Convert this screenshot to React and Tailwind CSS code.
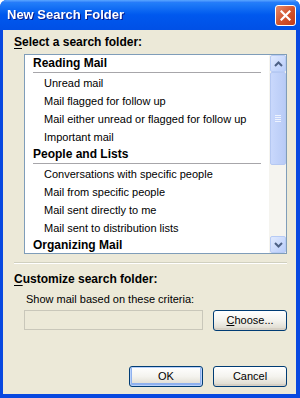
import React from "react";

const font = { fontFamily: '"Liberation Sans", Arial, sans-serif' };

function Header({ children }) {
  return (
    <div className="pl-[8px] pr-[8px]">
      <div className="h-[17px] leading-[17px] font-bold text-[12px] text-black whitespace-nowrap">{children}</div>
      <div className="h-[1px] bg-[#a7a6aa]" />
      <div className="h-[1px]" />
    </div>
  );
}

function Item({ children }) {
  return <div className="h-[18px] leading-[19px] pl-[19px] text-[11px] text-black whitespace-nowrap">{children}</div>;
}

function XPButton({ children, def, className = "" }) {
  return (
    <div
      className={
        "h-[21px] rounded-[3px] border border-[#003c74] bg-gradient-to-b from-[#ffffff] via-[#f4f3ee] to-[#dcd8cc] flex items-center justify-center text-[11px] text-black " +
        (def ? "shadow-[inset_0_0_0_1px_#b9d1fa,inset_0_-1px_0_2px_#8fb1ee] " : "shadow-[inset_0_-2px_0_#d6d0c5] ") +
        className
      }
    >
      {children}
    </div>
  );
}

function Arrow({ up }) {
  return (
    <div className="w-[16px] h-[17px] rounded-[2px] border border-[#b7cbf5] bg-gradient-to-br from-[#e1eafe] to-[#b9cdfa] flex items-center justify-center">
      <svg width="9" height="6" viewBox="0 0 9 6">
        <path d={up ? "M1 5 L4.5 1.5 L8 5" : "M1 1 L4.5 4.5 L8 1"} fill="none" stroke="#4d6185" strokeWidth="2" />
      </svg>
    </div>
  );
}

export default function App() {
  return (
    <div className="w-[300px] h-[398px] bg-white" style={font}>
      <div className="w-[300px] h-[398px] flex flex-col rounded-t-[7px] overflow-hidden bg-[#0842d9]">
        {/* title bar */}
        <div className="h-[30px] shrink-0 flex items-center justify-between pl-[7px] pr-[4px] bg-gradient-to-b from-[#2a86fb] via-[#0058ee] to-[#0050e6] relative">
          <div className="absolute inset-x-0 top-0 h-[3px] bg-gradient-to-b from-[#5ba6ff] to-[#1a72f8]" />
          <span className="relative text-white font-bold text-[13px] drop-shadow-[1px_1px_0_#0a1c8c]">
            New Search Folder
          </span>
          <div className="relative w-[21px] h-[21px] rounded-[3px] border border-white bg-gradient-to-br from-[#e68b6c] via-[#d2552f] to-[#c13b17] flex items-center justify-center">
            <svg width="11" height="11" viewBox="0 0 11 11">
              <path d="M1.5 1.5 L9.5 9.5 M9.5 1.5 L1.5 9.5" stroke="white" strokeWidth="2.2" strokeLinecap="square" />
            </svg>
          </div>
        </div>
        {/* body */}
        <div className="flex-1 flex pl-[3px] pr-[4px] pb-[4px] bg-[#0848e0]">
          <div className="flex-1 bg-[#ece9d8] flex flex-col pl-[11px] pr-[9px]">
            <div className="mt-[6px] h-[13px] leading-[13px] font-bold text-[12px] text-black">
              <span className="underline underline-offset-[2px]">S</span>elect a search folder:
            </div>
            <div className="mt-[5px] ml-[10px] h-[200px] border border-[#7f9db9] bg-white flex">
              <div className="flex-1 overflow-hidden">
                <Header>Reading Mail</Header>
                <Item>Unread mail</Item>
                <Item>Mail flagged for follow up</Item>
                <Item>Mail either unread or flagged for follow up</Item>
                <Item>Important mail</Item>
                <Header>People and Lists</Header>
                <Item>Conversations with specific people</Item>
                <Item>Mail from specific people</Item>
                <Item>Mail sent directly to me</Item>
                <Item>Mail sent to distribution lists</Item>
                <Header>Organizing Mail</Header>
              </div>
              <div className="w-[17px] bg-[#f5f4ef] flex flex-col items-end">
                <Arrow up />
                <div className="w-[16px] h-[93px] rounded-[2px] border border-[#b5c8f2] bg-gradient-to-r from-[#c9d8fc] to-[#b8cbf6] flex flex-col items-center justify-center gap-[1px]">
                  <div className="w-[6px] h-[1px] bg-[#eef3fe]" />
                  <div className="w-[6px] h-[1px] bg-[#eef3fe]" />
                  <div className="w-[6px] h-[1px] bg-[#eef3fe]" />
                  <div className="w-[6px] h-[1px] bg-[#eef3fe]" />
                </div>
                <div className="flex-1" />
                <Arrow />
              </div>
            </div>
            <div className="mt-[8px] h-[2px] border-t border-[#d0d0bf] border-b border-b-white" />
            <div className="mt-[9px] h-[13px] leading-[13px] font-bold text-[12px] text-black">
              <span className="underline underline-offset-[2px]">C</span>ustomize search folder:
            </div>
            <div className="mt-[7px] ml-[12px] h-[13px] leading-[13px] text-[11px] text-black">
              Show mail based on these criteria:
            </div>
            <div className="mt-[4px] ml-[10px] flex gap-[10px]">
              <div className="w-[179px] h-[20px] border border-[#c9c7ba] bg-[#ece9d8]" />
              <XPButton className="w-[74px]">
                <span><span className="underline">C</span>hoose...</span>
              </XPButton>
            </div>
            <div className="mt-[35px] flex justify-end gap-[10px]">
              <XPButton def className="w-[74px]">OK</XPButton>
              <XPButton className="w-[74px]">Cancel</XPButton>
            </div>
          </div>
        </div>
      </div>
    </div>
  );
}
